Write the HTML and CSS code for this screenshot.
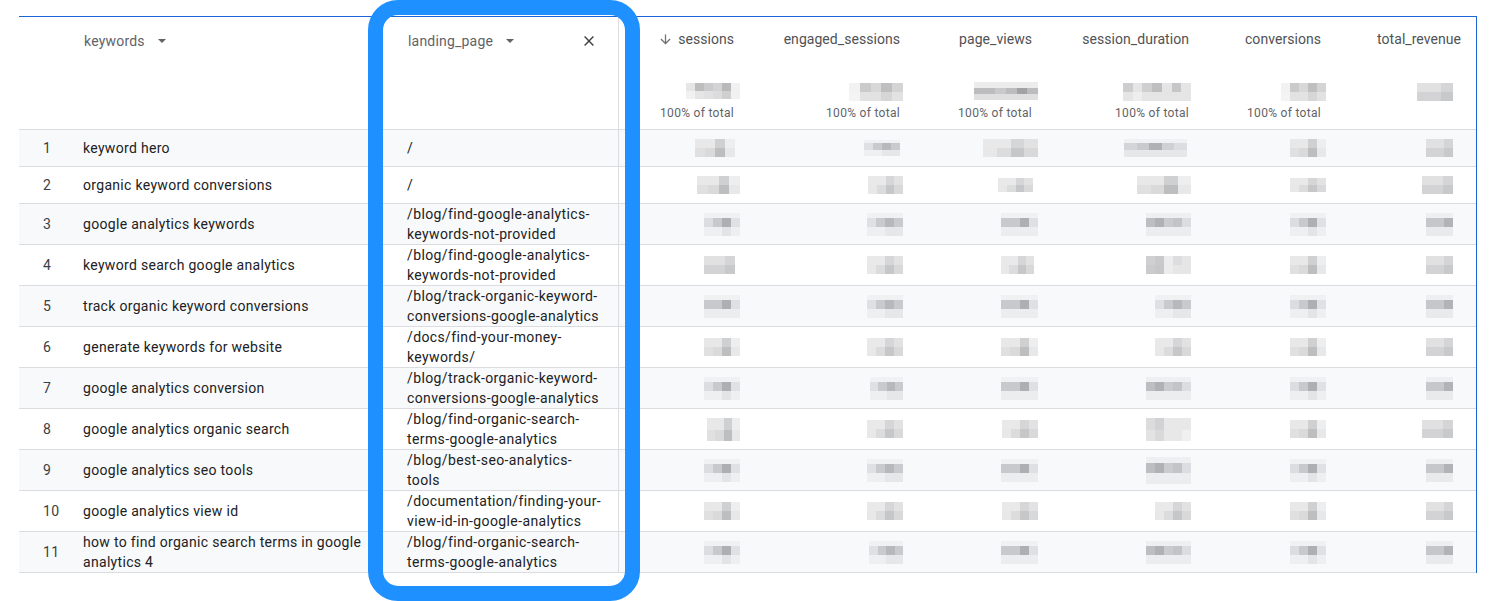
FILE: index.html
```html
<!DOCTYPE html>
<html lang="en">
<head>
<meta charset="utf-8">
<title>Keywords report</title>
<link rel="stylesheet" href="styles.css">
</head>
<body>
<svg class="defs" aria-hidden="true">
  <symbol id="hd" viewBox="0 0 6 2" preserveAspectRatio="none" shape-rendering="crispEdges">
    <rect width="6" height="2" fill="#f1f1f2"/><rect width="1" height="1" fill="#e6e6e7"/><rect x="1" width="1" height="1" fill="#bdbdbf"/><rect x="2" width="1" height="1" fill="#cbcbcd"/><rect x="3" width="1" height="1" fill="#d3d3d5"/><rect x="4" width="1" height="1" fill="#b9b9bb"/><rect x="1" y="1" width="1" height="1" fill="#e5e5e6"/><rect x="2" y="1" width="1" height="1" fill="#e1e1e2"/><rect x="3" y="1" width="1" height="1" fill="#dcdcdd"/><rect x="4" y="1" width="1" height="1" fill="#cfcfd0"/>
  </symbol>
  <symbol id="hb" viewBox="0 0 5 2" preserveAspectRatio="none" shape-rendering="crispEdges">
    <rect width="5" height="2" fill="#e2e2e3"/><rect width="1" height="1" fill="#f2f2f2"/><rect x="1" width="1" height="1" fill="#cacacb"/><rect x="2" width="1" height="1" fill="#d8d8d9"/><rect x="3" width="1" height="1" fill="#bfbfc1"/><rect x="4" width="1" height="1" fill="#d4d4d5"/><rect y="1" width="1" height="1" fill="#f4f4f4"/><rect x="3" y="1" width="1" height="1" fill="#d6d6d7"/>
  </symbol>
  <symbol id="hs" viewBox="0 0 6 3" preserveAspectRatio="none" shape-rendering="crispEdges">
    <rect width="6" height="3" fill="#ececed"/><rect y="1" width="6" height="1" fill="#bcbcbe"/><rect x="4" y="1" width="1" height="1" fill="#a2a2a4"/><rect x="2" y="1" width="1" height="1" fill="#c9c9cb"/><rect y="2" width="6" height="1" fill="#dfdfe0"/>
  </symbol>
  <symbol id="hw" viewBox="0 0 7 2" preserveAspectRatio="none" shape-rendering="crispEdges">
    <rect width="7" height="2" fill="#e5e5e6"/><rect width="1" height="1" fill="#cdcdcf"/><rect x="2" width="1" height="1" fill="#cfcfd1"/><rect x="3" width="1" height="1" fill="#bfbfc1"/><rect x="5" width="1" height="1" fill="#c6c6c8"/><rect x="1" y="1" width="1" height="1" fill="#eeeeef"/>
  </symbol>
  <symbol id="b1" viewBox="0 0 36 23" preserveAspectRatio="none" shape-rendering="crispEdges">
    <rect width="36" height="5" fill="#f0f1f2"/><rect y="5" width="9" height="9" fill="#dcdde0"/><rect x="9" y="5" width="9" height="9" fill="#c8c9cc"/><rect x="18" y="5" width="9" height="9" fill="#aeafb2"/><rect x="27" y="5" width="9" height="9" fill="#e0e1e4"/><rect y="14" width="36" height="9" fill="#eeeff0"/><rect x="18" y="14" width="9" height="9" fill="#e3e4e6"/>
  </symbol>
  <symbol id="b2" viewBox="0 0 36 23" preserveAspectRatio="none" shape-rendering="crispEdges">
    <rect width="36" height="5" fill="#f0f1f2"/><rect y="5" width="9" height="9" fill="#dfe0e3"/><rect x="9" y="5" width="9" height="9" fill="#c9cacd"/><rect x="18" y="5" width="9" height="9" fill="#b7b8bb"/><rect x="27" y="5" width="9" height="9" fill="#c9cacd"/><rect y="14" width="36" height="9" fill="#eeeff0"/><rect x="18" y="14" width="18" height="9" fill="#e6e7e9"/>
  </symbol>
  <symbol id="b3" viewBox="0 0 36 23" preserveAspectRatio="none" shape-rendering="crispEdges">
    <rect width="36" height="5" fill="#f0f1f2"/><rect y="5" width="18" height="9" fill="#c8c9cc"/><rect x="18" y="5" width="9" height="9" fill="#aeafb2"/><rect x="27" y="5" width="9" height="9" fill="#dfe0e3"/><rect y="14" width="36" height="9" fill="#ecedee"/>
  </symbol>
  <symbol id="b4" viewBox="0 0 45 23" preserveAspectRatio="none" shape-rendering="crispEdges">
    <rect width="45" height="5" fill="#eeeff0"/><rect y="5" width="9" height="9" fill="#bdbec1"/><rect x="9" y="5" width="9" height="9" fill="#b0b1b4"/><rect x="18" y="5" width="9" height="9" fill="#cacbce"/><rect x="27" y="5" width="9" height="9" fill="#c3c4c7"/><rect x="36" y="5" width="9" height="9" fill="#dcdde0"/><rect y="14" width="45" height="9" fill="#ecedee"/>
  </symbol>
  <symbol id="b5" viewBox="0 0 27 23" preserveAspectRatio="none" shape-rendering="crispEdges">
    <rect width="27" height="5" fill="#eeeff0"/><rect y="5" width="18" height="9" fill="#c6c7ca"/><rect x="18" y="5" width="9" height="9" fill="#b2b3b6"/><rect y="14" width="27" height="9" fill="#e9eaeb"/>
  </symbol>
  <symbol id="b6" viewBox="0 0 45 23" preserveAspectRatio="none" shape-rendering="crispEdges">
    <rect width="45" height="5" fill="#f0f1f2"/><rect y="5" width="9" height="9" fill="#d4d5d8"/><rect x="9" y="5" width="9" height="9" fill="#c9cacd"/><rect x="18" y="5" width="9" height="9" fill="#b0b1b4"/><rect x="27" y="5" width="9" height="9" fill="#cfd0d3"/><rect x="36" y="5" width="9" height="9" fill="#dcdde0"/><rect y="14" width="45" height="9" fill="#e6e7e9"/>
  </symbol>
  <symbol id="w1" viewBox="0 0 36 18" preserveAspectRatio="none" shape-rendering="crispEdges">
    <rect width="36" height="9" fill="#e8e8e8"/><rect x="18" width="9" height="9" fill="#cfd0d2"/><rect x="27" width="9" height="9" fill="#eeeeee"/><rect y="9" width="9" height="9" fill="#e0e0e1"/><rect x="9" y="9" width="9" height="9" fill="#dadadb"/><rect x="18" y="9" width="9" height="9" fill="#bdbec0"/><rect x="27" y="9" width="9" height="9" fill="#e8e8e9"/>
  </symbol>
  <symbol id="w2" viewBox="0 0 36 18" preserveAspectRatio="none" shape-rendering="crispEdges">
    <rect width="36" height="9" fill="#e9e9ea"/><rect x="18" width="9" height="9" fill="#d6d6d8"/><rect x="27" width="9" height="9" fill="#e2e2e3"/><rect y="9" width="9" height="9" fill="#e8e8e9"/><rect x="9" y="9" width="9" height="9" fill="#dcdcdd"/><rect x="18" y="9" width="9" height="9" fill="#c6c7c9"/><rect x="27" y="9" width="9" height="9" fill="#d9d9da"/>
  </symbol>
  <symbol id="w3" viewBox="0 0 45 18" preserveAspectRatio="none" shape-rendering="crispEdges">
    <rect width="45" height="18" fill="#e6e6e7"/><rect width="9" height="9" fill="#d0d0d2"/><rect x="9" width="9" height="9" fill="#c9c9cb"/><rect y="9" width="9" height="9" fill="#cbcbcd"/><rect x="9" y="9" width="9" height="9" fill="#c7c7c9"/><rect x="18" width="9" height="18" fill="#ececed"/><rect x="27" width="9" height="9" fill="#dddddf"/>
  </symbol>
  <symbol id="w4" viewBox="0 0 27 18" preserveAspectRatio="none" shape-rendering="crispEdges">
    <rect width="27" height="9" fill="#e1e1e2"/><rect x="18" width="9" height="9" fill="#d5d5d7"/><rect y="9" width="27" height="9" fill="#d3d3d5"/><rect x="18" y="9" width="9" height="9" fill="#c8c9cb"/>
  </symbol>
  <symbol id="w5" viewBox="0 0 45 18" preserveAspectRatio="none" shape-rendering="crispEdges">
    <rect width="45" height="18" fill="#e8e8e9"/><rect width="18" height="9" fill="#dcdcdd"/><rect x="9" width="9" height="9" fill="#d2d2d4"/><rect y="9" width="9" height="9" fill="#e3e3e4"/><rect x="9" y="9" width="9" height="9" fill="#d9d9da"/><rect x="36" y="9" width="9" height="9" fill="#f0f0f0"/>
  </symbol>
</svg>

<main class="report">
  <table class="grid">
    <colgroup>
      <col class="w-index"><col class="w-keyword"><col class="w-landing"><col class="w-sess"><col class="w-eng"><col class="w-views"><col class="w-dur"><col class="w-conv"><col class="w-rev">
    </colgroup>
    <thead>
      <tr>
        <th></th>
        <th class="dim-head">
          <div class="dim">keywords <svg class="caret" width="8" height="4" viewBox="0 0 8 4"><path d="M0 0h8L4 4z"/></svg></div>
        </th>
        <th class="landing dim-head">
          <div class="dim dim-landing">landing_page <svg class="caret" width="8" height="4" viewBox="0 0 8 4"><path d="M0 0h8L4 4z"/></svg>
            <svg class="close" width="10" height="10" viewBox="0 0 10 10"><path d="M.6.6l8.8 8.8M9.4.6L.6 9.4"/></svg>
          </div>
        </th>
        <th class="m1"><div class="metric"><div class="title"><svg class="sort" width="15" height="15" viewBox="0 0 24 24"><path d="M20 12l-1.41-1.41L13 16.17V4h-2v12.17l-5.58-5.59L4 12l8 8 8-8z"/></svg>sessions</div><svg class="blot head" width="54" height="16"><use href="#hd"/></svg><div class="pct">100% of total</div></div></th>
        <th class="m2"><div class="metric"><div class="title">engaged_sessions</div><svg class="blot head" width="54" height="18"><use href="#hb"/></svg><div class="pct tight">100% of total</div></div></th>
        <th class="m3"><div class="metric"><div class="title">page_views</div><svg class="blot head up" width="64" height="18"><use href="#hs"/></svg><div class="pct">100% of total</div></div></th>
        <th class="m4"><div class="metric"><div class="title">session_duration</div><svg class="blot head" width="68" height="18"><use href="#hw"/></svg><div class="pct tight">100% of total</div></div></th>
        <th class="m5"><div class="metric"><div class="title">conversions</div><svg class="blot head" width="45" height="18"><use href="#hb"/></svg><div class="pct tight">100% of total</div></div></th>
        <th class="m6"><div class="metric"><div class="title">total_revenue</div><svg class="blot head" width="36" height="18"><use href="#w4"/></svg></div></th>
      </tr>
    </thead>
    <tbody>
      <tr class="alt short">
        <td class="idx">1</td><td>keyword hero</td><td class="landing">/</td>
        <td class="m1"><svg class="blot nudge5" width="40" height="18"><use href="#w1"/></svg></td>
        <td class="m2"><svg class="blot nudge3" width="36" height="16"><use href="#b2"/></svg></td>
        <td class="m3"><svg class="blot" width="55" height="18"><use href="#w2"/></svg></td>
        <td class="m4"><svg class="blot nudge4" width="63" height="18"><use href="#b6"/></svg></td>
        <td class="m5"><svg class="blot" width="36" height="18"><use href="#w1"/></svg></td>
        <td class="m6"><svg class="blot" width="27" height="18"><use href="#w4"/></svg></td>
      </tr>
      <tr class="short">
        <td class="idx">2</td><td>organic keyword conversions</td><td class="landing">/</td>
        <td class="m1"><svg class="blot" width="43" height="18"><use href="#w1"/></svg></td>
        <td class="m2"><svg class="blot" width="35" height="18"><use href="#w2"/></svg></td>
        <td class="m3"><svg class="blot nudge5" width="35" height="14"><use href="#w2"/></svg></td>
        <td class="m4"><svg class="blot" width="54" height="18"><use href="#w1"/></svg></td>
        <td class="m5"><svg class="blot" width="36" height="14"><use href="#w2"/></svg></td>
        <td class="m6"><svg class="blot" width="31" height="18"><use href="#w4"/></svg></td>
      </tr>
      <tr class="alt">
        <td class="idx">3</td><td>google analytics keywords</td><td class="landing">/blog/find-google-analytics-<br>keywords-not-provided</td>
        <td class="m1"><svg class="blot" width="36" height="23"><use href="#b1"/></svg></td>
        <td class="m2"><svg class="blot" width="36" height="23"><use href="#b2"/></svg></td>
        <td class="m3"><svg class="blot" width="37" height="23"><use href="#b3"/></svg></td>
        <td class="m4"><svg class="blot" width="45" height="23"><use href="#b4"/></svg></td>
        <td class="m5"><svg class="blot" width="36" height="23"><use href="#b1"/></svg></td>
        <td class="m6"><svg class="blot" width="27" height="23"><use href="#b5"/></svg></td>
      </tr>
      <tr>
        <td class="idx">4</td><td>keyword search google analytics</td><td class="landing">/blog/find-google-analytics-<br>keywords-not-provided</td>
        <td class="m1"><svg class="blot nudge5" width="31" height="18"><use href="#w4"/></svg></td>
        <td class="m2"><svg class="blot" width="36" height="18"><use href="#w2"/></svg></td>
        <td class="m3"><svg class="blot nudge4" width="33" height="18"><use href="#w2"/></svg></td>
        <td class="m4"><svg class="blot" width="45" height="18"><use href="#w3"/></svg></td>
        <td class="m5"><svg class="blot" width="36" height="18"><use href="#w1"/></svg></td>
        <td class="m6"><svg class="blot" width="27" height="18"><use href="#w4"/></svg></td>
      </tr>
      <tr class="alt">
        <td class="idx">5</td><td>track organic keyword conversions</td><td class="landing">/blog/track-organic-keyword-<br>conversions-google-analytics</td>
        <td class="m1"><svg class="blot" width="36" height="23"><use href="#b3"/></svg></td>
        <td class="m2"><svg class="blot" width="36" height="23"><use href="#b2"/></svg></td>
        <td class="m3"><svg class="blot" width="37" height="23"><use href="#b3"/></svg></td>
        <td class="m4"><svg class="blot" width="36" height="23"><use href="#b2"/></svg></td>
        <td class="m5"><svg class="blot" width="36" height="23"><use href="#b1"/></svg></td>
        <td class="m6"><svg class="blot" width="27" height="23"><use href="#b5"/></svg></td>
      </tr>
      <tr>
        <td class="idx">6</td><td>generate keywords for website</td><td class="landing">/docs/find-your-money-<br>keywords/</td>
        <td class="m1"><svg class="blot" width="36" height="18"><use href="#w1"/></svg></td>
        <td class="m2"><svg class="blot" width="36" height="18"><use href="#w2"/></svg></td>
        <td class="m3"><svg class="blot" width="37" height="18"><use href="#w1"/></svg></td>
        <td class="m4"><svg class="blot" width="36" height="18"><use href="#w2"/></svg></td>
        <td class="m5"><svg class="blot" width="36" height="18"><use href="#w1"/></svg></td>
        <td class="m6"><svg class="blot" width="27" height="18"><use href="#w4"/></svg></td>
      </tr>
      <tr class="alt">
        <td class="idx">7</td><td>google analytics conversion</td><td class="landing">/blog/track-organic-keyword-<br>conversions-google-analytics</td>
        <td class="m1"><svg class="blot" width="36" height="23"><use href="#b1"/></svg></td>
        <td class="m2"><svg class="blot" width="33" height="23"><use href="#b2"/></svg></td>
        <td class="m3"><svg class="blot" width="37" height="23"><use href="#b3"/></svg></td>
        <td class="m4"><svg class="blot" width="45" height="23"><use href="#b4"/></svg></td>
        <td class="m5"><svg class="blot" width="36" height="23"><use href="#b1"/></svg></td>
        <td class="m6"><svg class="blot" width="27" height="23"><use href="#b5"/></svg></td>
      </tr>
      <tr>
        <td class="idx">8</td><td>google analytics organic search</td><td class="landing">/blog/find-organic-search-<br>terms-google-analytics</td>
        <td class="m1"><svg class="blot" width="33" height="23"><use href="#w1"/></svg></td>
        <td class="m2"><svg class="blot" width="36" height="18"><use href="#w2"/></svg></td>
        <td class="m3"><svg class="blot" width="36" height="18"><use href="#w2"/></svg></td>
        <td class="m4"><svg class="blot" width="45" height="23"><use href="#w5"/></svg></td>
        <td class="m5"><svg class="blot" width="36" height="18"><use href="#w1"/></svg></td>
        <td class="m6"><svg class="blot" width="31" height="18"><use href="#w4"/></svg></td>
      </tr>
      <tr class="alt">
        <td class="idx">9</td><td>google analytics seo tools</td><td class="landing">/blog/best-seo-analytics-<br>tools</td>
        <td class="m1"><svg class="blot" width="36" height="23"><use href="#b1"/></svg></td>
        <td class="m2"><svg class="blot" width="36" height="23"><use href="#b2"/></svg></td>
        <td class="m3"><svg class="blot" width="37" height="23"><use href="#b3"/></svg></td>
        <td class="m4"><svg class="blot" width="45" height="27"><use href="#b4"/></svg></td>
        <td class="m5"><svg class="blot" width="36" height="23"><use href="#b1"/></svg></td>
        <td class="m6"><svg class="blot" width="27" height="23"><use href="#b5"/></svg></td>
      </tr>
      <tr>
        <td class="idx">10</td><td>google analytics view id</td><td class="landing">/documentation/finding-your-<br>view-id-in-google-analytics</td>
        <td class="m1"><svg class="blot" width="36" height="18"><use href="#w1"/></svg></td>
        <td class="m2"><svg class="blot" width="36" height="18"><use href="#w2"/></svg></td>
        <td class="m3"><svg class="blot" width="36" height="18"><use href="#w2"/></svg></td>
        <td class="m4"><svg class="blot" width="36" height="18"><use href="#w2"/></svg></td>
        <td class="m5"><svg class="blot" width="36" height="18"><use href="#w1"/></svg></td>
        <td class="m6"><svg class="blot" width="27" height="18"><use href="#w4"/></svg></td>
      </tr>
      <tr class="alt">
        <td class="idx">11</td><td>how to find organic search terms in google<br>analytics 4</td><td class="landing">/blog/find-organic-search-<br>terms-google-analytics</td>
        <td class="m1"><svg class="blot" width="36" height="23"><use href="#b1"/></svg></td>
        <td class="m2"><svg class="blot" width="34" height="23"><use href="#b2"/></svg></td>
        <td class="m3"><svg class="blot" width="37" height="23"><use href="#b3"/></svg></td>
        <td class="m4"><svg class="blot" width="45" height="23"><use href="#b4"/></svg></td>
        <td class="m5"><svg class="blot" width="36" height="23"><use href="#b1"/></svg></td>
        <td class="m6"><svg class="blot" width="27" height="23"><use href="#b5"/></svg></td>
      </tr>
    </tbody>
  </table>
</main>
<div class="ring" aria-hidden="true"></div>
</body>
</html>
```
FILE: styles.css
```css
* { box-sizing: border-box; }
html, body { margin: 0; height: 601px; overflow: hidden; background: #fff; }
body { font-family: Roboto, "Liberation Sans", sans-serif; color: #202124; position: relative; }
.defs { position: absolute; width: 0; height: 0; }

.report {
  width: 1458px;
  margin: 16px 0 0 19px;
  border-top: 1px solid #1a66d6;
  border-right: 1px solid #1a66d6;
}
.grid {
  width: 1457px;
  table-layout: fixed;
  border-collapse: separate;
  border-spacing: 0;
  font-size: 14px;
  line-height: 20px;
  letter-spacing: .31px;
}
.w-index { width: 64px; }
.w-keyword { width: 300px; }
.w-landing { width: 236px; }
.w-sess { width: 130px; }
.w-eng { width: 166px; }
.w-views { width: 132px; }
.w-dur { width: 157px; }
.w-conv { width: 132px; }
.w-rev { width: 140px; }

th, td { padding: 0; border-bottom: 1px solid #dadce0; font-weight: 400; text-align: left; }
td { height: 41px; vertical-align: middle; }
th { height: 113px; vertical-align: top; padding-top: 12px; font-size: 14px; letter-spacing: .05px; color: #5f6368; }
tr.short td { height: 37px; }
tr.alt td { background: #f8f9fa; }

.idx { padding-left: 24px; color: #3c4043; }
.landing { padding-left: 24px; border-right: 1px solid #dadce0; letter-spacing: .38px; }

.dim-head { padding-top: 14px; letter-spacing: .2px; }
.dim { display: flex; align-items: center; padding-left: 1px; height: 20px; }
.caret { margin-left: 13px; fill: #5f6368; }
.dim-landing { padding-right: 24px; }
.close { margin-left: auto; fill: none; stroke: #3c4043; stroke-width: 1.4; }

.m1 { --text: 15px; --blot: 9px; }
.m2 { --text: 15px; --blot: 12px; }
.m3 { --text: 15px; --blot: 9px; }
.m4 { --text: 15px; --blot: 13px; }
.m5 { --text: 15px; --blot: 10px; }
.m6 { --text: 15px; --blot: 23px; }
td[class^="m"] { padding-right: var(--blot); }
th[class^="m"] { padding-right: var(--text); }

.metric { display: flex; flex-direction: column; align-items: flex-end; }
.title { display: flex; align-items: center; gap: 5px; height: 20px; color: #3c4043; opacity: .9; }
.sort { fill: #5f6368; }
.blot { display: block; margin-left: auto; }
.blot.head { margin-top: 34px; margin-right: calc(var(--blot) - var(--text)); }
.blot.head.up { margin-top: 33px; }
.nudge3 { margin-right: 3px; }
.nudge4 { margin-right: 4px; }
.nudge5 { margin-right: 5px; }
.pct { margin-top: 6px; font-size: 12px; line-height: 16px; letter-spacing: .3px; color: #5f6368; }
.pct.tight { margin-top: 4px; }
.blot.head.up + .pct { margin-top: 5px; }

.ring {
  position: absolute;
  left: 368px;
  top: 0;
  width: 272px;
  height: 601px;
  border: 15px solid #1e90ff;
  border-radius: 30px;
}
```
